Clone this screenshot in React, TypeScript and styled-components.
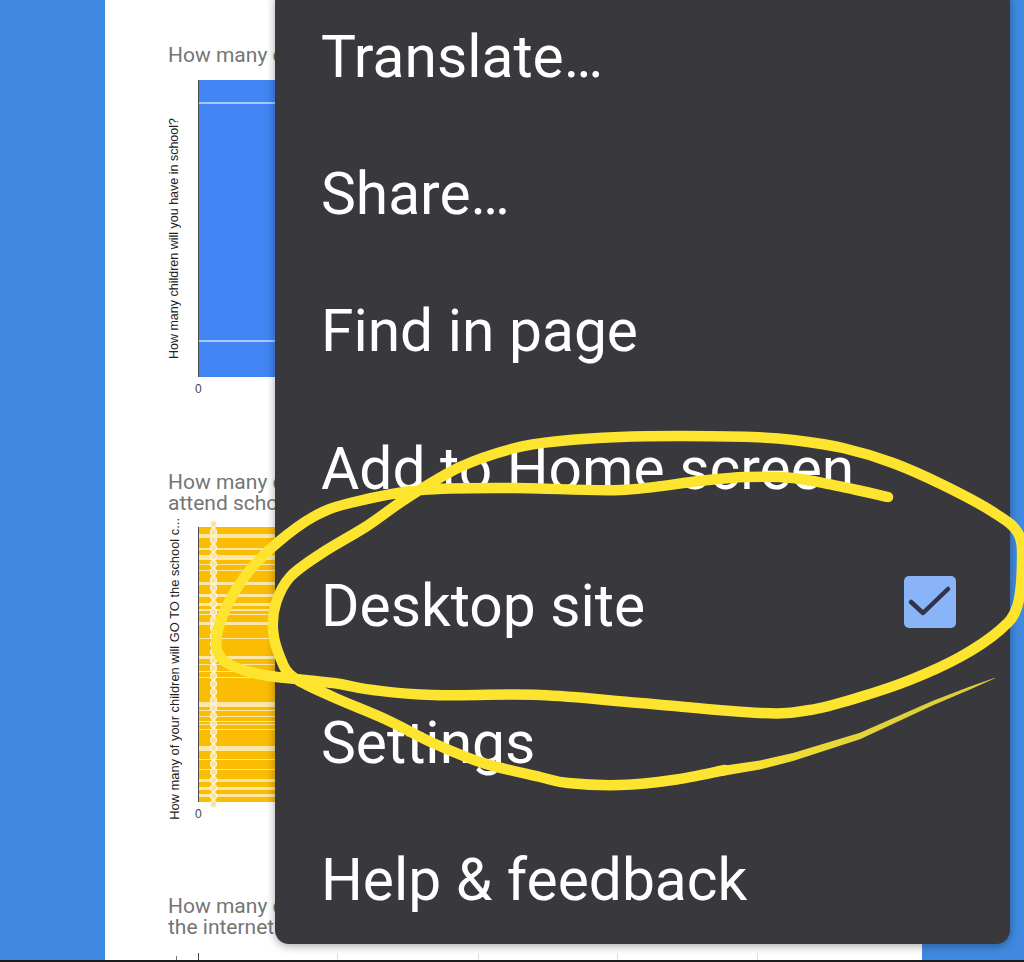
import React from "react";
import styled, { createGlobalStyle } from "styled-components";

const menuItems = ["Translate…", "Share…", "Find in page", "Add to Home screen", "Desktop site", "Settings", "Help & feedback"];

// [height, isLight] from the top of each plot
const blueBands: [number, boolean][] = [
  [22, false], [2, true], [236, false], [2, true], [35, false],
];

const yellowBands: [number, boolean][] = [
  [7, false], [4, true], [10, false], [2, true], [5, false], [5, true], [4, false], [1, true], [5, false], [1, true],
  [11, false], [3, true], [9, false], [3, true], [6, false], [3, true], [3, false], [2, true], [3, false], [1, true],
  [7, false], [3, true], [13, false], [1, true], [17, false], [3, true], [5, false], [1, true], [6, false], [1, true], [5, false], [1, true],
  [24, false], [5, true], [3, false], [1, true], [5, false], [1, true], [4, false], [1, true],
  [2, false], [1, true], [4, false], [1, true], [16, false], [5, true], [8, false], [1, true],
  [9, false], [1, true], [9, false], [3, true], [5, false], [3, true], [4, false], [3, true], [3, false],
];

type Pt = [number, number];

// marker strokes, traced from the picture
const outerLoop: Pt[] = [
  [888, 497], [843, 487], [793, 478], [745, 477], [699, 481], [620, 490], [515, 488], [421, 490], [350, 503],
  [313, 517], [277, 543], [250, 570], [230, 600], [218, 630], [217, 650], [227, 663], [250, 672], [277, 677],
  [333, 683], [373, 690], [433, 695], [540, 695], [640, 703], [760, 713], [810, 710], [860, 697], [910, 680],
  [960, 657], [1000, 630], [1017, 607], [1022, 563], [1018, 533], [993, 512], [943, 485], [893, 463], [843, 448],
  [793, 440], [752, 437], [680, 436], [620, 437], [560, 441], [515, 448], [460, 467], [407, 498],
  [367, 526], [322, 553], [290, 577], [276, 603], [273, 630], [280, 657], [293, 677], [333, 697], [387, 720],
  [433, 743], [483, 763], [540, 777], [568, 783], [620, 785], [673, 780], [725, 770],
];

// the stroke thins out as the marker lifts: [x, y, half width]
const tail: [number, number, number][] = [
  [722, 771, 5], [760, 765, 4.6], [793, 757, 4], [860, 736, 3.2], [933, 703, 2.3], [970, 688, 1.4], [995, 678, 0.3],
];
const tailOutline = [
  ...tail.map(([x, y, w]) => `${x},${y - w}`),
  ...[...tail].reverse().map(([x, y, w]) => `${x},${y + w}`),
].join(" ");

// smooth curve through the points (catmull-rom to bezier)
const curve = (pts: Pt[]) => {
  let d = `M${pts[0][0]} ${pts[0][1]}`;
  for (let i = 0; i < pts.length - 1; i++) {
    const p0 = pts[Math.max(i - 1, 0)];
    const p1 = pts[i];
    const p2 = pts[i + 1];
    const p3 = pts[Math.min(i + 2, pts.length - 1)];
    const c1 = [p1[0] + (p2[0] - p0[0]) / 6, p1[1] + (p2[1] - p0[1]) / 6];
    const c2 = [p2[0] - (p3[0] - p1[0]) / 6, p2[1] - (p3[1] - p1[1]) / 6];
    d += ` C${c1[0]} ${c1[1]} ${c2[0]} ${c2[1]} ${p2[0]} ${p2[1]}`;
  }
  return d;
};

const GlobalStyle = createGlobalStyle`
  html, body {
    margin: 0;
    padding: 0;
    overflow: hidden;
  }
`;

const Page = styled.div`
  position: relative;
  display: flex;
  box-sizing: border-box;
  width: 1024px;
  height: 962px;
  padding-left: 105px;
  overflow: hidden;
  background: #3f8ae0;
  border-bottom: 2px solid #1a1a1a;
  font-family: Roboto, sans-serif;
`;

const Sheet = styled.main`
  display: flex;
  flex-direction: column;
  box-sizing: border-box;
  width: 817px;
  padding: 45px 0 0 63px;
  background: #fff;
`;

const Heading = styled.h2<{ $gap?: number }>`
  margin: ${({ $gap }) => $gap ?? 0}px 0 0;
  font-size: 21px;
  font-weight: 400;
  line-height: 21px;
  white-space: nowrap;
  color: #757575;
`;

const ChartRow = styled.div<{ $top: number; $height: number }>`
  display: grid;
  grid-template-columns: 30px 600px;
  grid-template-rows: minmax(0, 1fr);
  height: ${({ $height }) => $height}px;
  margin-top: ${({ $top }) => $top}px;
`;

const AxisTitle = styled.div<{ $shift: number; $size: number }>`
  align-self: start;
  justify-self: start;
  margin-top: ${({ $shift }) => $shift}px;
  writing-mode: vertical-rl;
  transform: rotate(180deg);
  font-family: "Liberation Sans", Arial, sans-serif;
  font-size: ${({ $size }) => $size}px;
  line-height: 13px;
  white-space: nowrap;
  color: #222;
`;

const Plot = styled.div<{ $color: string }>`
  position: relative;
  display: flex;
  flex-direction: column;
  border-left: 1px solid #4a4a4a;
  background: ${({ $color }) => $color};
`;

const Band = styled.div<{ $h: number; $color: string }>`
  height: ${({ $h }) => $h}px;
  background: ${({ $color }) => $color};
`;

const BeadColumn = styled.div`
  position: absolute;
  top: -7px;
  left: 11px;
  display: flex;
  flex-direction: column;
`;

const Bead = styled.span`
  box-sizing: border-box;
  width: 7px;
  height: 8px;
  border: 1px solid #fff8e4;
  border-radius: 50%;
  background: #f8e3a4;
`;

const ZeroLabel = styled.div<{ $top: number }>`
  margin: ${({ $top }) => $top}px 0 0 27px;
  font-family: "Liberation Sans", Arial, sans-serif;
  font-size: 12px;
  line-height: 12px;
  color: #444;
`;

const TickRow = styled.div`
  display: flex;
  align-items: flex-end;
  height: 9px;
  margin-top: 15px;
`;

const Tick = styled.span<{ $gap: number; $h: number; $color: string }>`
  width: 1px;
  height: ${({ $h }) => $h}px;
  margin-left: ${({ $gap }) => $gap}px;
  background: ${({ $color }) => $color};
`;

const Menu = styled.nav`
  position: absolute;
  top: -12px;
  left: 275px;
  box-sizing: border-box;
  width: 735px;
  height: 956px;
  border-radius: 14px;
  background: #39383d;
  box-shadow: 0 2px 10px rgba(0, 0, 0, 0.35);
`;

const MenuItem = styled.div`
  display: flex;
  align-items: center;
  justify-content: space-between;
  box-sizing: border-box;
  height: 137.3px;
  padding: 0 54px 0 46px;
  font-size: 58.7px;
  color: #fff;
`;

const CheckBox = styled.span`
  display: flex;
  align-items: center;
  justify-content: center;
  width: 52px;
  height: 52px;
  margin-bottom: 8px;
  border-radius: 5px;
  background: #8ab4f8;
`;

const Scribble = styled.svg`
  position: absolute;
  top: 0;
  left: 0;
  pointer-events: none;
`;

const Check = () => (
  <svg width="52" height="52" viewBox="0 0 52 52" fill="none">
    <path d="M7 26 L19 37 L44 13" stroke="#30344a" strokeWidth="4.5" strokeLinecap="round" strokeLinejoin="round" />
  </svg>
);

const Bands: React.FC<{ bands: [number, boolean][]; base: string; light: string }> = ({ bands, base, light }) => (
  <>
    {bands.map(([h, isLight], i) => (
      <Band key={i} $h={h} $color={isLight ? light : base} />
    ))}
  </>
);

const App: React.FC = () => {
  return (
    <Page>
      <GlobalStyle />
      <Sheet>
        <Heading>How many c</Heading>
        <ChartRow $top={14} $height={297}>
          <AxisTitle $shift={38} $size={12.5}>How many children will you have in school?</AxisTitle>
          <Plot $color="#4285f4">
            <Bands bands={blueBands} base="#4285f4" light="#a9c9fb" />
          </Plot>
        </ChartRow>
        <ZeroLabel $top={6}>0</ZeroLabel>
        <Heading $gap={77}>
          How many c
          <br />
          attend scho
        </Heading>
        <ChartRow $top={13} $height={275}>
          <AxisTitle $shift={-9} $size={12.9}>How many of your children will GO TO the school c...</AxisTitle>
          <Plot $color="#fbbc04">
            <Bands bands={yellowBands} base="#fbbc04" light="#fde7a8" />
            <BeadColumn>
              {Array.from({ length: 36 }, (_, i) => (
                <Bead key={i} />
              ))}
            </BeadColumn>
          </Plot>
        </ChartRow>
        <ZeroLabel $top={6}>0</ZeroLabel>
        <Heading $gap={76}>
          How many c
          <br />
          the internet
        </Heading>
        <TickRow>
          <Tick $gap={8} $h={5} $color="#777" />
          <Tick $gap={21} $h={8} $color="#444" />
          <Tick $gap={138} $h={8} $color="#ddd" />
          <Tick $gap={140} $h={8} $color="#ddd" />
          <Tick $gap={138} $h={8} $color="#ddd" />
          <Tick $gap={139} $h={8} $color="#ddd" />
        </TickRow>
      </Sheet>
      <Menu>
        {menuItems.map((item) => (
          <MenuItem key={item}>
            {item}
            {item === "Desktop site" && (
              <CheckBox>
                <Check />
              </CheckBox>
            )}
          </MenuItem>
        ))}
      </Menu>
      <Scribble width="1024" height="962" viewBox="0 0 1024 962" fill="none">
        <defs>
          <linearGradient id="tailFade" x1="0" y1="0" x2="1" y2="0">
            <stop offset="0" stopColor="#fde52f" />
            <stop offset="0.5" stopColor="#e6d53a" />
            <stop offset="1" stopColor="#d6c93e" />
          </linearGradient>
        </defs>
        <polygon points={tailOutline} fill="url(#tailFade)" />
        <path d={curve(outerLoop)} stroke="#fde52f" strokeWidth="10.5" strokeLinecap="round" strokeLinejoin="round" />
      </Scribble>
    </Page>
  );
};

export default App;
